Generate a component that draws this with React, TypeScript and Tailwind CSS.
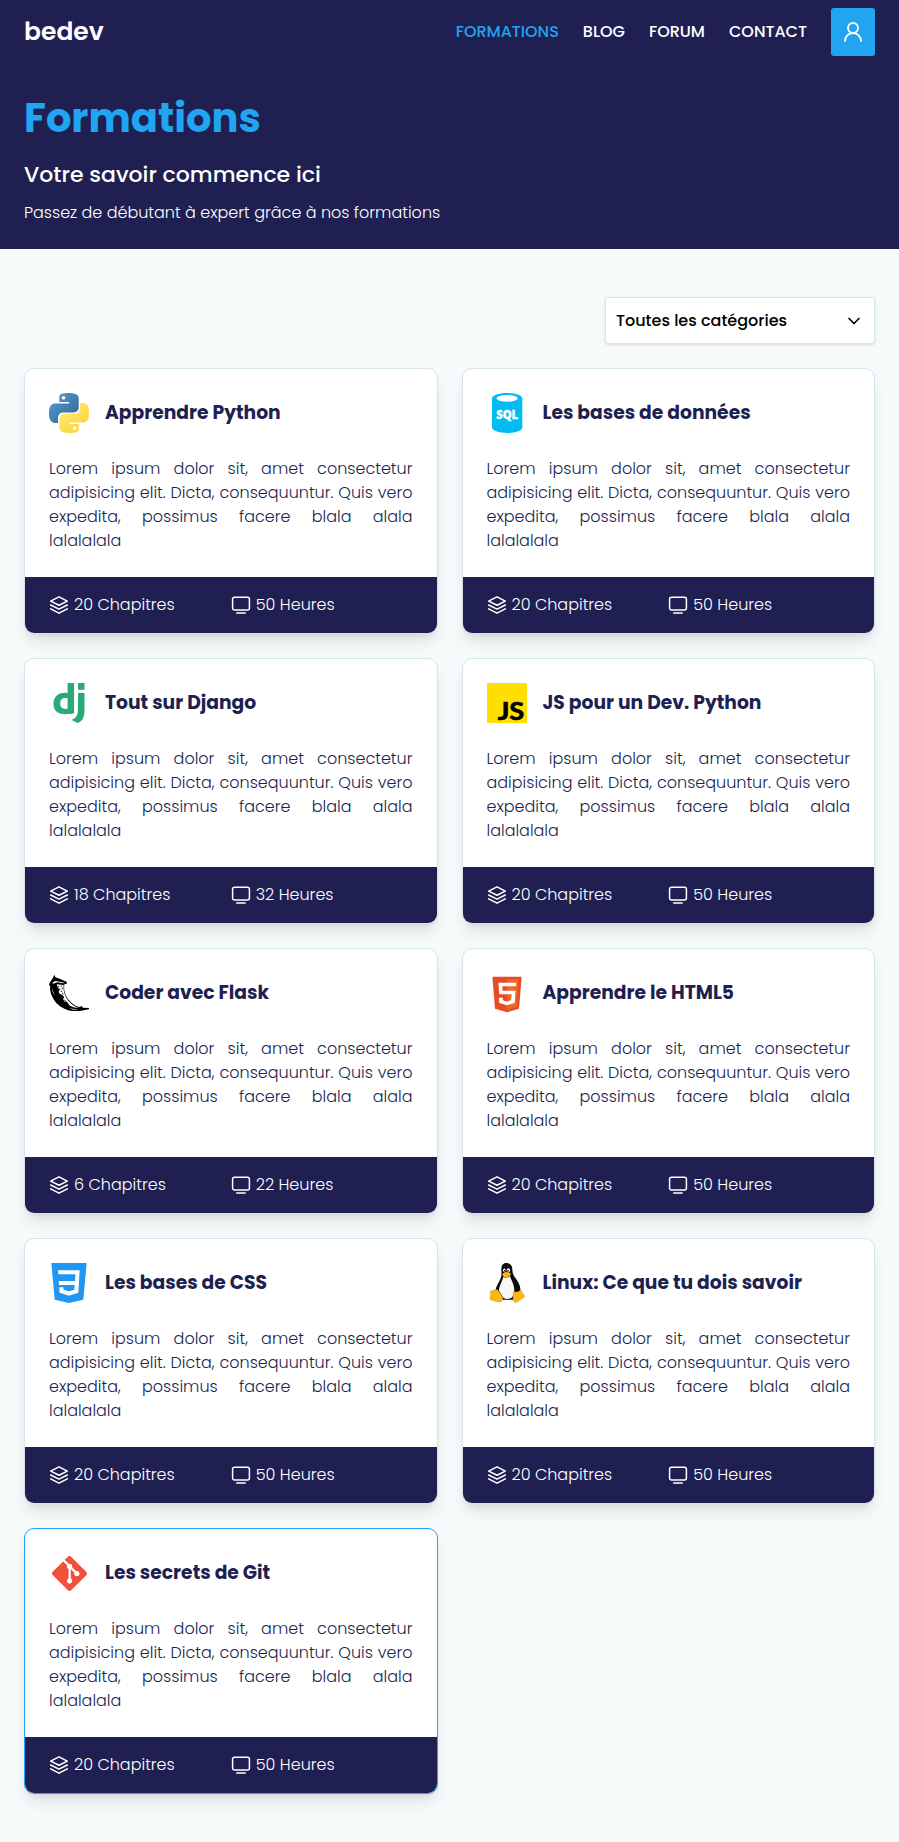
import type { ReactNode } from "react";
import { ChevronDown, UserRound } from "lucide-react";
import { SiDjango, SiGit } from "react-icons/si";

function PythonLogo() {
  return (
    <svg viewBox="0 0 24 24" className="size-10">
      <defs>
        <linearGradient id="py-blue" x1="0" y1="0" x2="0.9" y2="0.9">
          <stop offset="0" stopColor="#5a9fd4" />
          <stop offset="1" stopColor="#306998" />
        </linearGradient>
        <linearGradient id="py-yellow" x1="0.2" y1="0.1" x2="0.8" y2="0.9">
          <stop offset="0" stopColor="#ffe873" />
          <stop offset="1" stopColor="#ffd43b" />
        </linearGradient>
      </defs>
      <path fill="url(#py-blue)" d="M14.25.18l.9.2.73.26.59.3.45.32.34.34.25.34.16.33.1.3.04.26.02.2-.01.13V8.5l-.05.63-.13.55-.21.46-.26.38-.3.31-.33.25-.35.19-.35.14-.33.1-.3.07-.26.04-.21.02H8.77l-.69.05-.59.14-.5.22-.41.27-.33.32-.27.35-.2.36-.15.37-.1.35-.07.32-.04.27-.02.21v3.06H3.17l-.21-.03-.28-.07-.32-.12-.35-.18-.36-.26-.36-.36-.35-.46-.32-.59-.28-.73-.21-.88-.14-1.05-.05-1.23.06-1.22.16-1.04.24-.87.32-.71.36-.57.4-.44.42-.33.42-.24.4-.16.36-.1.32-.05.24-.01h.16l.06.01h8.16v-.83H6.18l-.01-2.75-.02-.37.05-.34.11-.31.17-.28.25-.26.31-.23.38-.2.44-.18.51-.15.58-.12.64-.1.71-.06.77-.04.84-.02 1.27.05zm-6.3 1.98l-.23.33-.08.41.08.41.23.34.33.22.41.09.41-.09.33-.22.23-.34.08-.41-.08-.41-.23-.33-.33-.22-.41-.09-.41.09z" />
      <path fill="url(#py-yellow)" d="M21.1 6.11l.28.06.32.12.35.18.36.27.36.35.35.47.32.59.28.73.21.88.14 1.04.05 1.23-.06 1.23-.16 1.04-.24.86-.32.71-.36.57-.4.45-.42.33-.42.24-.4.16-.36.09-.32.05-.24.02-.16-.01h-8.22v.82h5.84l.01 2.76.02.36-.05.34-.11.31-.17.29-.25.25-.31.24-.38.2-.44.17-.51.15-.58.13-.64.09-.71.07-.77.04-.84.01-1.27-.04-1.07-.14-.9-.2-.73-.25-.59-.3-.45-.33-.34-.34-.25-.34-.16-.33-.1-.3-.04-.25-.02-.2.01-.13v-5.34l.05-.64.13-.54.21-.46.26-.38.3-.32.33-.24.35-.2.35-.14.33-.1.3-.06.26-.04.21-.02.13-.01h5.84l.69-.05.59-.14.5-.21.41-.28.33-.32.27-.35.2-.36.15-.36.1-.35.07-.32.04-.28.02-.21V6.07h2.09l.14.01zm-6.47 14.25l-.23.33-.08.41.08.41.23.33.33.23.41.08.41-.08.33-.23.23-.33.08-.41-.08-.41-.23-.33-.33-.23-.41-.08-.41.08z" />
    </svg>
  );
}

function SqlLogo() {
  return (
    <svg viewBox="0 0 120 120" className="size-10">
      <path fill="#00bcf2" d="M15 17C15 7 35 0 60.500 0S106 7 106 17V103C106 113 86 120 60.500 120S15 113 15 103Z" />
      <ellipse cx="60.500" cy="16" rx="32" ry="10" fill="#fff" />
      <text x="60.500" y="77" fill="#fff" stroke="#fff" strokeWidth="1" fontSize="35" fontWeight="900" textAnchor="middle" textLength="66" lengthAdjust="spacingAndGlyphs" className="font-['Open_Sans']">
        SQL
      </text>
    </svg>
  );
}

function JsLogo() {
  return (
    <svg viewBox="0 0 120 120" className="size-10">
      <path fill="#ffdf00" d="M0 0H120V120H0z" />
      <text x="32" y="110" fill="#000" stroke="#000" strokeWidth="2" fontSize="75" fontWeight="700" textLength="80" lengthAdjust="spacingAndGlyphs" className="font-['Lato']">
        JS
      </text>
    </svg>
  );
}

function FlaskLogo() {
  return (
    <svg viewBox="27 24 120 120" className="size-10">
      <path d="M43 29l3 8 13 4 10 5 12 5-1 5-7 2c-1 9-1 18 2 27 5 16 18 30 33 38l10 3 8-3 2 5 21 1-3 4-22 4c-13 2-32 2-43-3C60 127 45 113 37 96 31 84 29 72 31 64l-4-3 2-8 9-13z" fill="#000" />
      <path d="M50 58l21 2c-1 11 0 20 4 30 5 14 15 25 28 33 5 3 9 5 14 6-12 0-22-3-30-9l-8-11-5 1-5-8 4-5-7-8-5 1-5-10 3-6-5-5z" fill="#fff" />
      <path d="M37 53l9-5 14 2 15 4-7 1-16-3-13 4zM36 68l4 14 5 9-7-9zM88 129l14 3h14l-16 2z" fill="#fff" />
      <path d="M53 65l5 1M57 72l4 1M62 78l5 3M60 88l4 1M67 93l3 4M67 68l0 5M73 104l3 4M80 113l6 4M62 63l4 0M40 41l9 5M66 84l4 5" stroke="#000" strokeWidth="2.500" fill="none" />
    </svg>
  );
}

function HtmlLogo() {
  return (
    <svg viewBox="20 24 120 120" className="size-10">
      <path fill="#e44d26" d="M36 35H124L116 131 80 142 44 131z" />
      <path fill="#f06529" d="M80 43H115L109 125 80 134z" />
      <path fill="#fff" d="M54 53H108L107 64H66L67 77H106L103 114 80 121 57 114 56 98H67L68 106 80 110 92 106 94 88H57z" />
    </svg>
  );
}

function CssLogo() {
  return (
    <svg viewBox="27 24 120 120" className="size-10">
      <path fill="#2196f3" d="M34 24H140L130 134 87 144 44 134z" />
      <path fill="#fff" d="M54 46H119L115 113 87 122 59 113 58 97H70L71 104 87 109 103 104 104 90H57L56 78H105L106 58H55z" />
    </svg>
  );
}

function TuxLogo() {
  return (
    <svg viewBox="20 24 120 120" className="size-10">
      <path fill="#0a0a0a" d="M78 24C89 24 96 31 96 43C96 56 100 62 107 71C116 83 122 97 120 111C118 120 113 128 105 134H62C52 129 44 119 45 108C46 97 54 85 59 75C64 66 64 57 63 44C63 31 68 24 78 24z" />
      <path fill="#f7f7f7" d="M69 65C75 70 83 68 89 63C91 72 99 83 101 97C103 109 101 122 94 128C86 133 76 133 69 128L56 107C55 95 65 82 69 65z" />
      <ellipse cx="72" cy="46" rx="4" ry="5.500" fill="#fff" />
      <ellipse cx="84" cy="46" rx="5" ry="6.500" fill="#fff" />
      <circle cx="73" cy="47.500" r="2.400" />
      <circle cx="83" cy="47.500" r="2.700" />
      <path fill="#f9b812" d="M66 57C70 53 75 50 79 51C84 52 91 54 92 57C90 63 82 68 77 68C72 68 66 62 66 57z" />
      <path fill="#fbb615" stroke="#d58a06" strokeWidth="1" d="M32 107C38 108 42 104 46 103C53 103 59 114 64 122C71 132 67 141 57 141C48 141 39 136 30 134C26 131 31 124 31 118C29 112 29 108 32 107z" />
      <path fill="#fbb615" stroke="#d58a06" strokeWidth="1" d="M100 109C104 113 114 112 120 105C126 107 123 113 128 117C133 121 136 125 129 129C121 132 116 139 110 142C103 144 97 139 98 131C99 124 97 114 100 109z" />
    </svg>
  );
}

function LayersIcon() {
  return (
    <svg viewBox="0 0 24 24" className="size-5" fill="none" stroke="currentColor" strokeWidth="1.900" strokeLinecap="round" strokeLinejoin="round">
      <path d="M12 2.300 2 7.300l10 5 10-5z" />
      <path d="m2 12 10 5L22 12" />
      <path d="m2 16.700 10 5 10-5" />
    </svg>
  );
}

function MonitorIcon() {
  return (
    <svg viewBox="0 0 24 24" className="size-5" fill="none" stroke="currentColor" strokeWidth="1.800" strokeLinecap="round" strokeLinejoin="round">
      <rect x="1.900" y="2.800" width="20.200" height="15.200" rx="2.400" />
      <path d="M6.800 21.500h10.200" />
    </svg>
  );
}

type Course = { title: string; logo: ReactNode; chapters: number; hours: number; active?: boolean };

const courses: Course[] = [
  { title: "Apprendre Python", logo: <PythonLogo />, chapters: 20, hours: 50 },
  { title: "Les bases de données", logo: <SqlLogo />, chapters: 20, hours: 50 },
  { title: "Tout sur Django", logo: <SiDjango className="size-10 text-[#2ba977]" />, chapters: 18, hours: 32 },
  { title: "JS pour un Dev. Python", logo: <JsLogo />, chapters: 20, hours: 50 },
  { title: "Coder avec Flask", logo: <FlaskLogo />, chapters: 6, hours: 22 },
  { title: "Apprendre le HTML5", logo: <HtmlLogo />, chapters: 20, hours: 50 },
  { title: "Les bases de CSS", logo: <CssLogo />, chapters: 20, hours: 50 },
  { title: "Linux: Ce que tu dois savoir", logo: <TuxLogo />, chapters: 20, hours: 50 },
  { title: "Les secrets de Git", logo: <SiGit className="size-[35px] text-[#f0513a]" />, chapters: 20, hours: 50, active: true },
];

const links = ["FORMATIONS", "BLOG", "FORUM", "CONTACT"];

function CourseCard({ course }: { course: Course }) {
  return (
    <article
      className={`overflow-hidden rounded-[10px] border bg-white shadow-[0_10px_15px_-3px_rgba(0,0,0,0.1),0_4px_6px_-4px_rgba(0,0,0,0.1)] ${course.active ? "border-[#22a5f1]" : "border-[#d5e3ec]"}`}
    >
      <div className="p-6">
        <div className="flex items-center gap-4">
          <div className="flex size-10 items-center justify-center">{course.logo}</div>
          <h3 className="text-[18.72px] leading-7 font-bold">{course.title}</h3>
        </div>
        <p className="mt-6 text-justify leading-6 font-light">
          Lorem ipsum dolor sit, amet consectetur adipisicing elit. Dicta, consequuntur. Quis vero expedita, possimus facere blala alala lalalalala
        </p>
      </div>
      <div className="grid h-14 grid-cols-2 items-center bg-[#201f52] px-6 font-light text-white">
        <div className="flex items-center gap-[5px]">
          <LayersIcon />
          <span>{course.chapters} Chapitres</span>
        </div>
        <div className="flex items-center gap-[5px]">
          <MonitorIcon />
          <span>{course.hours} Heures</span>
        </div>
      </div>
    </article>
  );
}

export default function App() {
  return (
    <div className="min-h-[1842px] bg-[#f6fafb] font-['Poppins','Inter',sans-serif] text-base text-[#201f52]">
      <header className="bg-[#201f52] px-6 pb-6 text-white">
        <nav className="flex h-16 items-center justify-between">
          <a className="text-[25px] leading-9 font-semibold">bedev</a>
          <div className="flex items-center gap-6 font-medium">
            {links.map((link, i) => (
              <a key={link} className={i === 0 ? "text-[#22a5f1]" : "text-white"}>
                {link}
              </a>
            ))}
            <button className="flex h-12 w-11 items-center justify-center rounded-[3px] bg-[#22a5f1]" aria-label="Compte">
              <UserRound className="size-6" strokeWidth={1.8} />
            </button>
          </div>
        </nav>
        <h1 className="mt-6 text-[40px] leading-[60px] font-bold text-[#22a5f1]">Formations</h1>
        <h2 className="mt-2.5 text-[22px] leading-[33px] font-medium">Votre savoir commence ici</h2>
        <p className="mt-2.5 leading-6 font-light">Passez de débutant à expert grâce à nos formations</p>
      </header>
      <main className="px-6 pt-12">
        <div className="flex justify-end">
          <button className="flex h-[47px] w-[270px] items-center justify-between rounded-[3px] border border-[#d5e3ec] bg-white px-2.5 font-medium text-black shadow-sm">
            <span>Toutes les catégories</span>
            <ChevronDown className="size-5" strokeWidth={2} />
          </button>
        </div>
        <section className="mt-6 grid grid-cols-2 gap-6">
          {courses.map((course) => (
            <CourseCard key={course.title} course={course} />
          ))}
        </section>
      </main>
    </div>
  );
}
